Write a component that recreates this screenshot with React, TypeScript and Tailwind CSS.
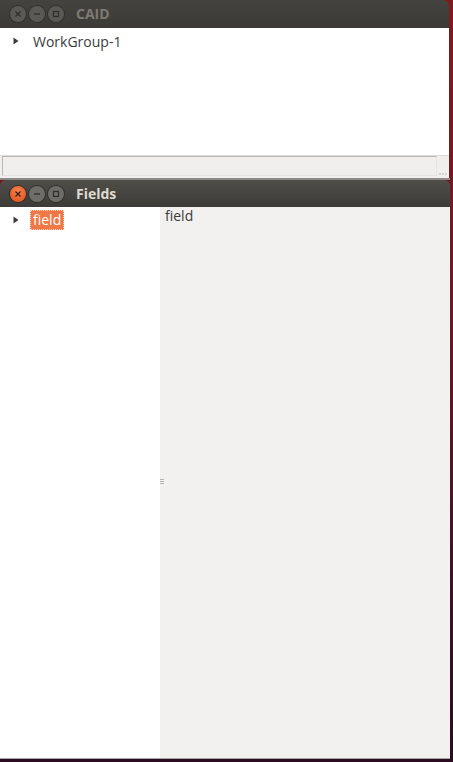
import React from 'react';

const font = { fontFamily: '"Open Sans", "DejaVu Sans", sans-serif' };

const WinButtons: React.FC<{ active?: boolean }> = ({ active }) => (
  <div className="flex items-center gap-[3px] pl-[10px]">
    <div
      className={`w-[16px] h-[16px] rounded-full flex items-center justify-center ${
        active ? 'bg-[radial-gradient(circle_at_50%_35%,#f6844f,#df4a16)] shadow-[0_0_0_1px_#2e2d29]' : 'bg-[#5a5954] shadow-[0_0_0_1px_#33322e]'
      }`}
    >
      <svg width="8" height="8" viewBox="0 0 8 8">
        <path d="M1.5 1.5 L6.5 6.5 M6.5 1.5 L1.5 6.5" stroke={active ? '#3b1a0c' : '#2f2e2b'} strokeWidth="1.3" />
      </svg>
    </div>
    <div className={`w-[16px] h-[16px] rounded-full flex items-center justify-center shadow-[0_0_0_1px_#33322e] ${active ? 'bg-[#6e6d68]' : 'bg-[#5a5954]'}`}>
      <svg width="8" height="8" viewBox="0 0 8 8">
        <path d="M1 4 H7" stroke="#2f2e2b" strokeWidth="1.3" />
      </svg>
    </div>
    <div className={`w-[16px] h-[16px] rounded-full flex items-center justify-center shadow-[0_0_0_1px_#33322e] ${active ? 'bg-[#6e6d68]' : 'bg-[#5a5954]'}`}>
      <svg width="8" height="8" viewBox="0 0 8 8">
        <rect x="1.5" y="1.5" width="5" height="5" fill="none" stroke="#2f2e2b" strokeWidth="1.2" />
      </svg>
    </div>
  </div>
);

const Arrow: React.FC = () => (
  <svg width="8" height="8" viewBox="0 0 8 8">
    <path d="M1.5 0.5 L6.5 4 L1.5 7.5 Z" fill="#3c3c3c" />
  </svg>
);

export default function App() {
  return (
    <div
      className="w-[453px] h-[762px] flex flex-col overflow-hidden bg-[linear-gradient(180deg,#7e1b1e_0%,#6a1a24_40%,#3a1028_80%,#2b0d22_100%)]"
      style={font}
    >
      {/* CAID window */}
      <div className="w-[449px] flex flex-col">
        <div className="h-[28px] flex items-center rounded-tr-[6px] bg-[linear-gradient(180deg,#44433f,#3b3a36)]">
          <WinButtons />
          <span className="ml-[12px] text-[14px] font-bold text-[#7d7a72] leading-none">CAID</span>
        </div>
        <div className="h-[127px] bg-white">
          <div className="flex items-center h-[26px] pl-[12px]">
            <Arrow />
            <span className="ml-[13px] text-[14px] text-[#3c3c3c]">WorkGroup-1</span>
          </div>
        </div>
        <div className="h-[23px] bg-[#f0efed] border-t border-[#dcdbd8] flex px-[2px] pb-[2px]">
          <div className="flex-1 border border-[#b9b8b4] border-b-[#e4e3e0] border-r-[#e4e3e0]" />
          <div className="w-[10px] flex flex-wrap content-end justify-end gap-[1px] pb-[1px]">
            <span className="w-[2px] h-[2px] bg-[#d4d3cf]" />
            <span className="w-[2px] h-[2px] bg-[#d4d3cf]" />
            <span className="w-[2px] h-[2px] bg-[#d4d3cf]" />
          </div>
        </div>
      </div>
      <div className="h-[2px] w-[450px] bg-[#8c8a86]" />
      {/* Fields window */}
      <div className="w-[450px] flex flex-col flex-1">
        <div className="h-[27px] flex items-center rounded-t-[6px] bg-[linear-gradient(180deg,#4f4e49,#3c3b37)]">
          <WinButtons active />
          <span className="ml-[12px] text-[14px] font-bold text-[#dfdbd2] leading-none">Fields</span>
        </div>
        <div className="flex-1 flex border-b border-[#a8a6a2]">
          <div className="w-[160px] bg-white">
            <div className="flex items-center h-[26px] pl-[12px]">
              <Arrow />
              <span className="ml-[10px] px-[3px] text-[14px] text-white bg-[#f07746] outline-1 outline-dotted outline-[#fbd3c0] -outline-offset-1 leading-[20px]">
                field
              </span>
            </div>
          </div>
          <div className="flex-1 bg-[#f2f1f0] relative">
            <div className="absolute left-0 top-[272px] flex flex-col gap-[1px]">
              <span className="w-[4px] h-px bg-[#b5b4b0]" />
              <span className="w-[4px] h-px bg-[#b5b4b0]" />
              <span className="w-[4px] h-px bg-[#b5b4b0]" />
            </div>
            <div className="pl-[5px] text-[14px] text-[#3c3c3c] leading-[18px]">field</div>
          </div>
        </div>
        <div className="h-[3px]" />
      </div>
    </div>
  );
}
